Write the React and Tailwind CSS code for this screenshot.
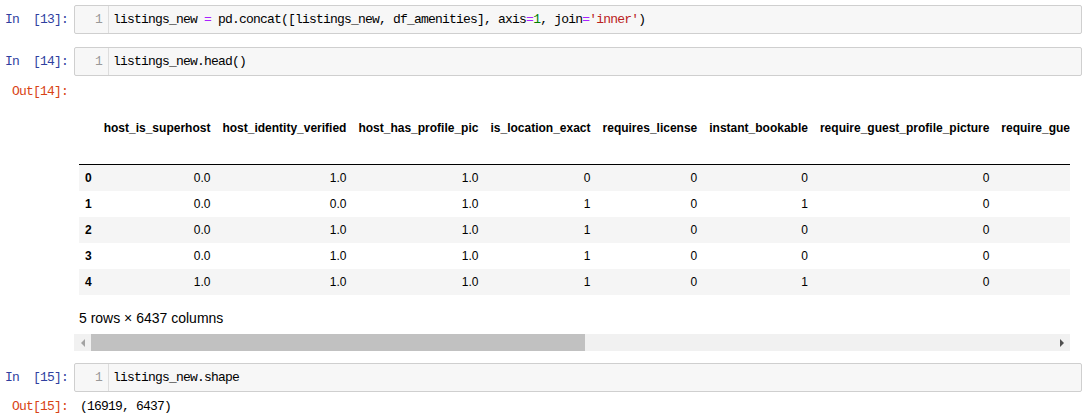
const MONO = 'font-["Liberation_Mono",monospace] text-[13px] tracking-[-0.8px] leading-[17px]';

const COLUMNS = [
  'host_is_superhost',
  'host_identity_verified',
  'host_has_profile_pic',
  'is_location_exact',
  'requires_license',
  'instant_bookable',
  'require_guest_profile_picture',
  'require_guest_phone_verification',
];

const ROWS = [
  ['0.0', '1.0', '1.0', '0', '0', '0', '0', '0'],
  ['0.0', '0.0', '1.0', '1', '0', '1', '0', '0'],
  ['0.0', '1.0', '1.0', '1', '0', '0', '0', '0'],
  ['0.0', '1.0', '1.0', '1', '0', '0', '0', '0'],
  ['1.0', '1.0', '1.0', '1', '0', '1', '0', '0'],
];

function Prompt({ kind, n }) {
  const isIn = kind === 'in';
  return (
    <div
      className={`w-[74px] shrink-0 whitespace-pre pr-[6px] text-right ${MONO} ${
        isIn ? 'pt-[6px] text-[#303f9f]' : 'pt-[3px] text-[#d84315]'
      }`}
    >
      {isIn ? `In  [${n}]:` : `Out[${n}]:`}
    </div>
  );
}

function InputCell({ n, children }) {
  return (
    <div className="flex">
      <Prompt kind="in" n={n} />
      <div className="flex flex-1 rounded-[2px] border border-[#cfcfcf] bg-[#f7f7f7]">
        <div className={`w-[34px] shrink-0 border-r border-[#dddddd] py-[5px] pr-[6px] text-right text-[#999999] ${MONO}`}>
          1
        </div>
        <div className={`whitespace-pre py-[5px] pl-[4px] text-black ${MONO}`}>{children}</div>
      </div>
    </div>
  );
}

function DataFrame() {
  return (
    <div className="mr-[12px] min-w-0 flex-1 overflow-hidden pt-[35px]">
      <table className="ml-[5px] w-max border-separate border-spacing-0 whitespace-nowrap font-['Liberation_Sans',Arial,sans-serif] text-[12px] leading-[14px] text-black">
        <thead>
          <tr>
            <th className="border-b border-black px-[6px] pt-[6px] pb-[29px]" />
            {COLUMNS.map((c) => (
              <th key={c} className="border-b border-black px-[6px] pt-[6px] pb-[29px] text-right align-top font-bold">
                {c}
              </th>
            ))}
          </tr>
        </thead>
        <tbody>
          {ROWS.map((row, i) => (
            <tr key={i} className={i % 2 === 0 ? 'bg-[#f5f5f5]' : 'bg-white'}>
              <th className="p-[6px] text-left font-bold">{i}</th>
              {row.map((v, j) => (
                <td key={j} className="p-[6px] text-right">
                  {v}
                </td>
              ))}
            </tr>
          ))}
        </tbody>
      </table>
      <p className="ml-[5px] mt-[15px] font-['Liberation_Sans',Arial,sans-serif] text-[14px] leading-[17px] text-black">
        5 rows × 6437 columns
      </p>
      <div className="mt-[7px] flex h-[17px] items-center bg-[#f1f1f1]">
        <div className="flex w-[17px] shrink-0 items-center justify-center">
          <div className="h-0 w-0 border-y-[4px] border-r-[4px] border-y-transparent border-r-[#a3a3a3]" />
        </div>
        <div className="h-[17px] w-[494px] bg-[#c1c1c1]" />
        <div className="flex-1" />
        <div className="flex w-[17px] shrink-0 items-center justify-center">
          <div className="h-0 w-0 border-y-[4px] border-l-[4px] border-y-transparent border-l-[#505050]" />
        </div>
      </div>
    </div>
  );
}

export default function App() {
  return (
    <div className="flex w-[1087px] flex-col bg-white pt-[5px] pr-[5px]">
      <InputCell n={13}>
        listings_new <span className="text-[#aa22ff]">=</span> pd.concat([listings_new, df_amenities], axis
        <span className="text-[#aa22ff]">=</span>
        <span className="text-[#008000]">1</span>, join<span className="text-[#aa22ff]">=</span>
        <span className="text-[#ba2121]">'inner'</span>)
      </InputCell>

      <div className="mt-[13px]">
        <InputCell n={14}>listings_new.head()</InputCell>
      </div>

      <div className="mt-[4px] flex">
        <Prompt kind="out" n={14} />
        <DataFrame />
      </div>

      <div className="mt-[12px]">
        <InputCell n={15}>listings_new.shape</InputCell>
      </div>

      <div className="mt-[3px] flex">
        <Prompt kind="out" n={15} />
        <div className={`whitespace-pre pt-[3px] pl-[6px] text-black ${MONO}`}>(16919, 6437)</div>
      </div>
    </div>
  );
}
